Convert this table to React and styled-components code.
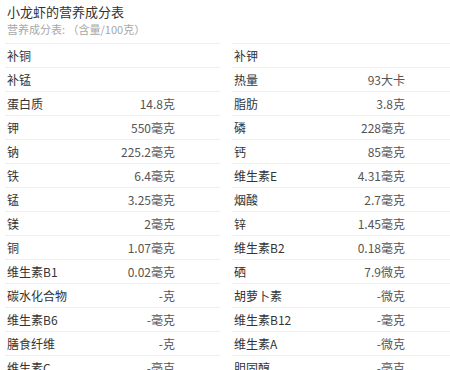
import React from "react";
import styled, { createGlobalStyle } from "styled-components";

const Global = createGlobalStyle`
  html, body { margin: 0; padding: 0; background: #fff; overflow: hidden; }
  body { font-family: "Noto Sans CJK SC", "Liberation Sans", sans-serif; }
`;

const Page = styled.div`
  width: 450px;
  height: 370px;
  overflow: hidden;
  padding-left: 5px;
  box-sizing: border-box;
`;

const Title = styled.h1`
  margin: 3px 0 0 2px;
  font-size: 13px;
  line-height: 18px;
  font-weight: 400;
  color: #333;
`;

const Subtitle = styled.div`
  margin-left: 2px;
  font-size: 11px;
  line-height: 16px;
  color: #a8a8a8;
`;

const Table = styled.div`
  margin-top: 6px;
  display: grid;
  grid-template-columns: 215px 1fr;
  column-gap: 12px;
`;

const Cell = styled.div`
  display: flex;
  align-items: center;
  justify-content: space-between;
  height: 23px;
  border-top: 1px solid #efefef;
  padding: 0 45px 0 2px;
  font-size: 12px;
`;

const Label = styled.span`
  color: #333;
`;

const Value = styled.span`
  color: #555;
`;

const rows = [
  [["补铜", ""], ["补钾", ""]],
  [["补锰", ""], ["热量", "93大卡"]],
  [["蛋白质", "14.8克"], ["脂肪", "3.8克"]],
  [["钾", "550毫克"], ["磷", "228毫克"]],
  [["钠", "225.2毫克"], ["钙", "85毫克"]],
  [["铁", "6.4毫克"], ["维生素E", "4.31毫克"]],
  [["锰", "3.25毫克"], ["烟酸", "2.7毫克"]],
  [["镁", "2毫克"], ["锌", "1.45毫克"]],
  [["铜", "1.07毫克"], ["维生素B2", "0.18毫克"]],
  [["维生素B1", "0.02毫克"], ["硒", "7.9微克"]],
  [["碳水化合物", "-克"], ["胡萝卜素", "-微克"]],
  [["维生素B6", "-毫克"], ["维生素B12", "-毫克"]],
  [["膳食纤维", "-克"], ["维生素A", "-微克"]],
  [["维生素C", "-毫克"], ["胆固醇", "-毫克"]],
];

export default function App() {
  return (
    <Page>
      <Global />
      <Title>小龙虾的营养成分表</Title>
      <Subtitle>营养成分表: （含量/100克）</Subtitle>
      <Table>
        {rows.flatMap((r, i) =>
          r.map(([l, v], j) => (
            <Cell key={`${i}-${j}`}>
              <Label>{l}</Label>
              <Value>{v}</Value>
            </Cell>
          ))
        )}
      </Table>
    </Page>
  );
}
